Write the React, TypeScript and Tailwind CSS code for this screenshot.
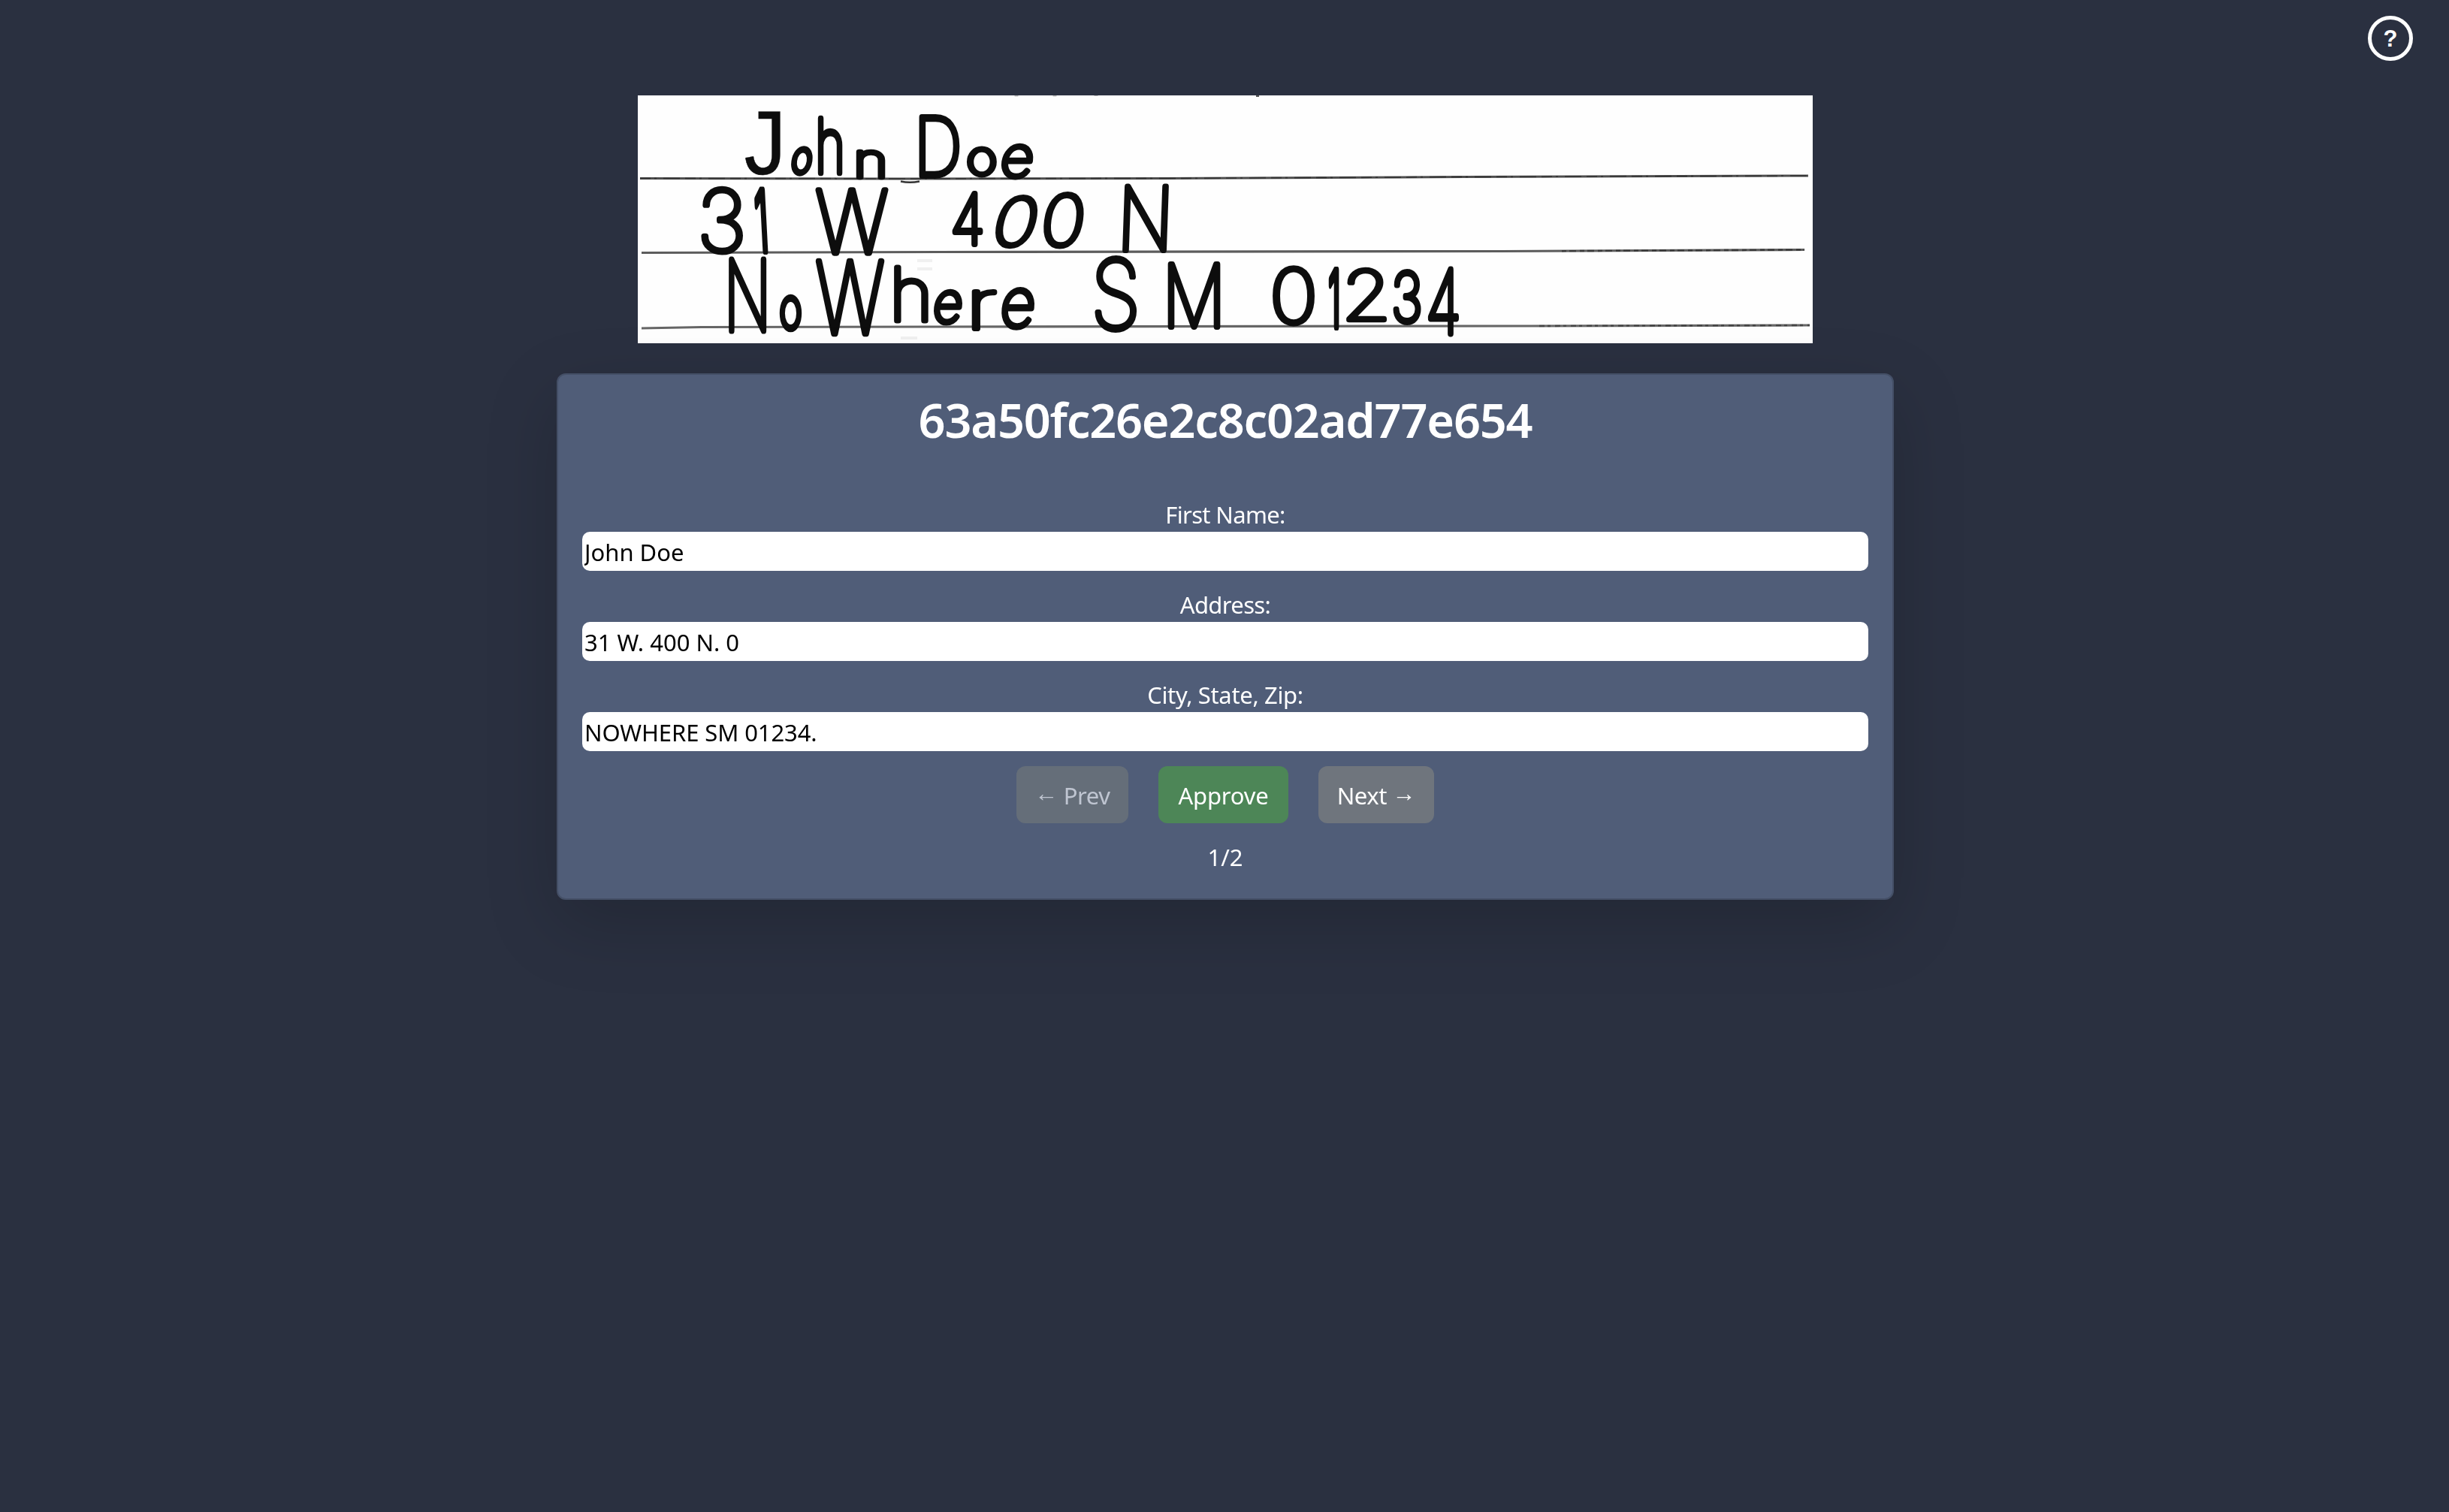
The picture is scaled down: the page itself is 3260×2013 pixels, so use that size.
import React from "react";

type Glyph = {
  ch: string;
  x: number;
  y: number;
  w: number;
  h: number;
  skew?: number;
  font?: string;
  weight?: number;
  stroke?: number;
};

const NOTE: Glyph[] = [
  { ch: "J", x: 143, y: 20, w: 47, h: 86, font: "Liberation Mono", weight: 400, stroke: 0.4 },
  { ch: "o", x: 204, y: 67, w: 29, h: 40, skew: -8 },
  { ch: "h", x: 239, y: 28, w: 34, h: 79 },
  { ch: "n", x: 291, y: 71, w: 38, h: 42 },
  { ch: "D", x: 374, y: 26, w: 55, h: 85 },
  { ch: "o", x: 438, y: 67, w: 40, h: 43 },
  { ch: "e", x: 484, y: 64, w: 42, h: 49, skew: -8 },
  { ch: "3", x: 84, y: 121, w: 56, h: 92 },
  { ch: "1", x: 155, y: 123, w: 18, h: 88, weight: 300, skew: 3 },
  { ch: "W", x: 236, y: 122, w: 98, h: 92 },
  { ch: "4", x: 418, y: 128, w: 42, h: 74 },
  { ch: "0", x: 478, y: 131, w: 52, h: 73, skew: -14 },
  { ch: "0", x: 541, y: 128, w: 52, h: 77, skew: -8 },
  { ch: "N", x: 646, y: 118, w: 60, h: 92, skew: -2 },
  { ch: "N", x: 120, y: 215, w: 52, h: 102 },
  { ch: "o", x: 188, y: 265, w: 31, h: 50 },
  { ch: "W", x: 236, y: 217, w: 93, h: 104 },
  { ch: "h", x: 341, y: 226, w: 46, h: 78 },
  { ch: "e", x: 394, y: 258, w: 38, h: 49, skew: -7 },
  { ch: "r", x: 445, y: 257, w: 33, h: 58 },
  { ch: "e", x: 484, y: 255, w: 44, h: 58, skew: -6 },
  { ch: "S", x: 608, y: 213, w: 57, h: 103 },
  { ch: "M", x: 705, y: 222, w: 71, h: 90 },
  { ch: "0", x: 845, y: 226, w: 56, h: 82 },
  { ch: "1", x: 918, y: 230, w: 17, h: 82, weight: 300 },
  { ch: "2", x: 943, y: 229, w: 54, h: 74 },
  { ch: "3", x: 1005, y: 231, w: 38, h: 74 },
  { ch: "4", x: 1051, y: 228, w: 43, h: 93 },
];

const measure = (ch: string, font: string, weight: number) => {
  const ctx = document.createElement("canvas").getContext("2d")!;
  ctx.font = `${weight} 200px "${font}"`;
  const m = ctx.measureText(ch);
  return {
    left: -m.actualBoundingBoxLeft / 200,
    width: (m.actualBoundingBoxLeft + m.actualBoundingBoxRight) / 200,
    height: (m.actualBoundingBoxAscent + m.actualBoundingBoxDescent) / 200,
    descent: m.actualBoundingBoxDescent / 200,
  };
};

/** One handwritten character, stretched to fill its own box on the note. */
function Ink({ ch, x, y, w, h, skew = 0, font = "Inter", weight = 100, stroke = 7.2 }: Glyph) {
  const m = measure(ch, font, weight);
  const size = (h - stroke) / m.height;
  const sx = (w - stroke) / (m.width * size);
  // Keeps the pen about equally thick on narrowed and widened letters.
  const pen = Math.min(stroke / Math.sqrt(sx), 10);
  return (
    <g transform={`translate(${x + w / 2} ${y + h / 2}) skewX(${skew}) translate(${-w / 2} ${h / 2 - stroke / 2})`}>
      <text
        transform={`translate(${stroke / 2} 0) scale(${sx} 1) translate(${-m.left * size} ${-m.descent * size})`}
        fontFamily={font}
        fontWeight={weight}
        fontSize={size}
        strokeWidth={pen}
      >
        {ch}
      </text>
    </g>
  );
}

function ScannedNote() {
  return (
    <svg
      viewBox="0 0 1564 330"
      className="block h-[330px] w-[1564px] shrink-0 bg-[#fefefe]"
      role="img"
      aria-label="John Doe, 31 W 400 N, NoWhere SM 01234"
    >
      {/* ruled lines and scanner specks */}
      <g fill="none" className="blur-[0.6px]">
        <path d="M3 110.5L350 111L700 110.5L1100 108.5L1558 107" stroke="#4d4d4d" strokeWidth="3" />
        <path d="M3 110.5L350 111L700 110.5L1100 108.5L1558 107" stroke="#222" strokeWidth="2" strokeDasharray="14 5 3 9 22 7" opacity=".5" />
        <path d="M5 209.5L400 208.5L1150 207.5L1553 205.5" stroke="#5c5c5c" strokeWidth="3.2" />
        <path d="M1230 207.2L1553 205.5" stroke="#222" strokeWidth="2.4" strokeDasharray="6 4 9 5" opacity=".6" />
        <path d="M5 310L85 308.5L400 308L1190 307L1560 306" stroke="#666" strokeWidth="3.2" />
        <path d="M1200 307L1560 306" stroke="#222" strokeWidth="2.4" strokeDasharray="7 4 4 6" opacity=".5" />
        <path d="M350 114.5q12 2.500 25 0" stroke="#333" strokeWidth="2.500" />
        <path d="M825 0v2" stroke="#555" strokeWidth="4" />
        <path d="M504 0v1.500M555 0v1.500M610 0v1" stroke="#bbb" strokeWidth="5" />
        <path d="M372 220h20M372 231h20M350 323h22" stroke="#f0f0f0" strokeWidth="4" />
      </g>
      <g fill="#0d0d0d" stroke="#0d0d0d" strokeLinejoin="round" strokeLinecap="round" className="blur-[0.6px]">
        {NOTE.map((g, i) => (
          <Ink key={i} {...g} />
        ))}
      </g>
    </svg>
  );
}

function Field({ label, value, labelClass = "", valueClass = "" }: { label: string; value: string; labelClass?: string; valueClass?: string }) {
  return (
    <label className="flex flex-col">
      <span className={`h-12 text-center leading-[50px] ${labelClass}`}>{label}</span>
      <input
        defaultValue={value}
        className={`h-[52px] w-full rounded-[10px] bg-white px-[3px] pt-[2px] text-black outline-none ${valueClass}`}
      />
    </label>
  );
}

export default function App() {
  return (
    <div className="flex h-[2013px] w-[3260px] flex-col items-center bg-[#2a3040] pl-[2px] font-['Noto_Sans',sans-serif] text-[31px] text-white">
      <header className="flex h-[127px] w-full shrink-0 justify-end pt-[21px] pr-12">
        <button className="flex size-[60px] items-center justify-center rounded-full border-[5px] border-white font-['Liberation_Sans',sans-serif] text-[31px] leading-none font-bold">
          ?
        </button>
      </header>
      <ScannedNote />
      <main className="mt-10 flex h-[701px] w-[1780px] flex-col rounded-[12px] border-2 border-[#444f66] bg-[#505d78] px-8 pt-5 shadow-[0_32px_96px_rgba(0,0,0,0.175)]">
        <h1 className="h-[78px] text-center text-[63px] leading-[80px] font-semibold tracking-[-1.2px]">63a50fc26e2c8c02ad77e654</h1>
        <form className="mt-[63px] flex flex-col gap-5" onSubmit={(e) => e.preventDefault()}>
          <Field label="First Name:" value="John Doe" labelClass="tracking-[-0.65px]" />
          <Field label="Address:" value="31 W. 400 N. 0" labelClass="tracking-[-0.65px]" />
          <Field label="City, State, Zip:" value="NOWHERE SM 01234." labelClass="tracking-[-0.35px]" valueClass="tracking-[-0.1px]" />
          <div className="flex h-[76px] justify-center gap-10">
            <button disabled className="w-[149px] rounded-[12px] bg-[#656e79] pt-[2px] tracking-[-0.4px] text-[#bfc5d1]">
              <span className="relative -top-1">←</span> Prev
            </button>
            <button className="w-[173px] rounded-[12px] bg-[#4d8657] pt-[2px] tracking-[-0.2px]">Approve</button>
            <button className="w-[154px] rounded-[12px] bg-[#6f757d] pt-[2px] tracking-[-0.4px]">
              Next <span className="relative -top-1">→</span>
            </button>
          </div>
        </form>
        <p className="mt-[21px] h-12 text-center leading-[48px]">1/2</p>
      </main>
    </div>
  );
}
